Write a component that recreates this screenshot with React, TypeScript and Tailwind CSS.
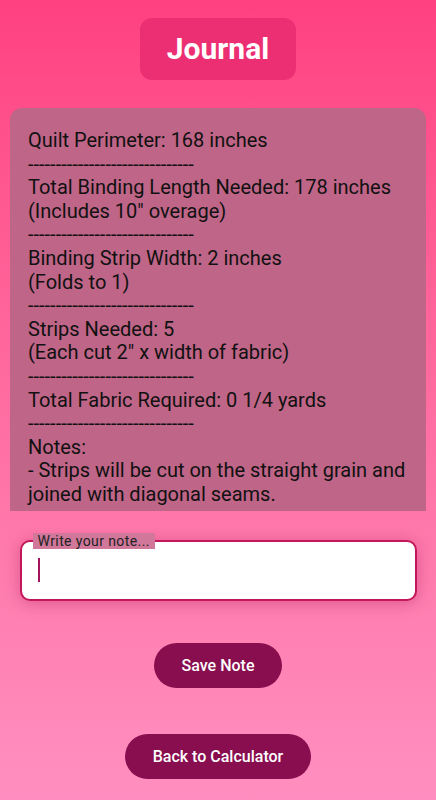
import React from "react";

const lines: string[] = [
  "Quilt Perimeter: 168 inches",
  "------------------------------",
  "Total Binding Length Needed: 178 inches",
  '(Includes 10" overage)',
  "------------------------------",
  "Binding Strip Width: 2 inches",
  "(Folds to 1)",
  "------------------------------",
  "Strips Needed: 5",
  '(Each cut 2" x width of fabric)',
  "------------------------------",
  "Total Fabric Required: 0 1/4 yards",
  "------------------------------",
  "Notes:",
  "- Strips will be cut on the straight grain and",
  "joined with diagonal seams.",
];

export default function App() {
  return (
    <div
      className="h-[800px] w-full bg-gradient-to-b from-[#ff4081] to-[#ff8fc0] flex flex-col items-center overflow-hidden"
      style={{ fontFamily: "Roboto, 'Noto Sans', sans-serif" }}
    >
      <div className="mt-[18px] px-[27px] py-[13px] rounded-xl bg-[#ec2f73] text-white text-[30px] font-bold leading-[36px]">
        Journal
      </div>

      <div className="mt-[28px] w-[416px] h-[403px] shrink-0 rounded-t-xl bg-[#bf6587] overflow-hidden pt-[21px] px-[18px] text-[20px] leading-[23.6px] text-[#111]">
        {lines.map((l, i) => (
          <div key={i} className="whitespace-nowrap">
            {l}
          </div>
        ))}
      </div>

      <div className="relative mt-[29px] w-[397px] h-[61px] rounded-[10px] border-2 border-[#c2185b] bg-white shadow-[0_2px_16px_rgba(150,20,80,0.35)]">
        <span className="absolute -top-[9px] left-[11px] px-[5px] bg-[#d0779a] text-[14px] tracking-[0.4px] leading-[16px] text-[#222]">
          Write your note...
        </span>
        <div className="absolute left-[16px] top-[16px] w-[2px] h-[24px] bg-[#a3155a]" />
      </div>

      <button className="mt-[42px] w-[128px] h-[45px] rounded-full bg-[#880e4f] text-white text-[16px] font-medium">
        Save Note
      </button>

      <button className="mt-[46px] w-[186px] h-[45px] rounded-full bg-[#880e4f] text-white text-[16px] font-medium">
        Back to Calculator
      </button>
    </div>
  );
}
